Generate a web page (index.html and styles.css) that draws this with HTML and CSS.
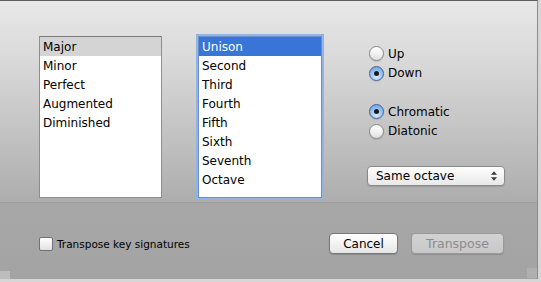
FILE: index.html
```html
<!DOCTYPE html>
<html>
<head>
    <title>Transpose</title>
    <link rel="stylesheet" href="styles.css">
</head>
<body>
    <div class="window">
        <div class="top-pane">
            <div class="list-box quality-list">
                <div class="list-row selected-inactive">Major</div>
                <div class="list-row">Minor</div>
                <div class="list-row">Perfect</div>
                <div class="list-row">Augmented</div>
                <div class="list-row">Diminished</div>
            </div>

            <div class="list-box interval-list">
                <div class="list-row selected">Unison</div>
                <div class="list-row">Second</div>
                <div class="list-row">Third</div>
                <div class="list-row">Fourth</div>
                <div class="list-row">Fifth</div>
                <div class="list-row">Sixth</div>
                <div class="list-row">Seventh</div>
                <div class="list-row">Octave</div>
            </div>

            <div class="options">
                <div class="radio-group">
                    <label class="radio"><span class="radio-dot"></span>Up</label>
                    <label class="radio"><span class="radio-dot checked"></span>Down</label>
                </div>
                <div class="radio-group">
                    <label class="radio"><span class="radio-dot checked"></span>Chromatic</label>
                    <label class="radio"><span class="radio-dot"></span>Diatonic</label>
                </div>
                <div class="popup">
                    <span>Same octave</span>
                    <svg class="popup-arrows" viewBox="0 0 7 11">
                        <path d="M3.5 0L7 4H0z"/>
                        <path d="M3.5 11L7 7H0z"/>
                    </svg>
                </div>
            </div>
        </div>

        <div class="bottom-pane">
            <label class="check">
                <span class="check-box"></span>
                Transpose key signatures
            </label>
            <div class="buttons">
                <button class="btn">Cancel</button>
                <button class="btn disabled">Transpose</button>
            </div>
        </div>

        <div class="grip grip-left"></div>
        <div class="grip grip-right"></div>
    </div>
</body>
</html>
```

FILE: styles.css
```css
* {
    margin: 0;
    padding: 0;
    box-sizing: border-box;
}

body {
    width: 541px;
    height: 282px;
    background: #d6d6d6;
    font-family: 'DejaVu Sans', sans-serif;
    font-size: 12px;
    color: #000;
    overflow: hidden;
}

.window {
    position: relative;
    width: 538px;
    height: 279px;
    border-top: 1px solid #5c5c5c;
    border-right: 1px solid #8c8c8c;
    display: flex;
    flex-direction: column;
    background: #a5a5a5;
}

.top-pane {
    height: 201px;
    display: flex;
    align-items: flex-start;
    padding: 35px 0 0 39px;
    background: linear-gradient(to bottom, #e8e8e8 0%, #d6d6d6 35%, #bdbdbd 75%, #adadad 100%);
}

/* List boxes */
.list-box {
    background: #fff;
    border: 1px solid #8d8d8d;
    border-top-color: #7a7a7a;
    height: 162px;
}

.quality-list {
    width: 123px;
}

.interval-list {
    width: 124px;
    margin-left: 36px;
    border-color: #6a8fcf;
    box-shadow: 0 0 0 2px #93b3e3;
}

.list-row {
    height: 19px;
    line-height: 19px;
    padding: 1px 0 0 3px;
    white-space: nowrap;
}

.list-row.selected-inactive {
    background: #d4d4d4;
}

.list-row.selected {
    background: #3875d7;
    color: #fff;
}

/* Right column */
.options {
    margin-left: 46px;
    padding-top: 8px;
    display: flex;
    flex-direction: column;
}

.radio-group {
    display: flex;
    flex-direction: column;
    margin-bottom: 19px;
}

.radio {
    display: flex;
    align-items: center;
    height: 19.5px;
    padding-left: 1px;
}

.radio-dot {
    width: 15px;
    height: 15px;
    border-radius: 50%;
    margin-right: 4px;
    border: 1px solid #888;
    background: linear-gradient(to bottom, #ffffff 0%, #f2f2f2 50%, #dedede 100%);
    box-shadow: 0 1px 1px rgba(0, 0, 0, 0.12);
    display: flex;
    align-items: center;
    justify-content: center;
}

.radio-dot.checked {
    border-color: #4d5f9a;
    background: radial-gradient(circle at 50% 75%, #d6ecff 0%, #9cc8f5 45%, #5f93dc 100%);
}

.radio-dot.checked::after {
    content: '';
    width: 5px;
    height: 5px;
    border-radius: 50%;
    background: #1b1b1b;
}

.popup {
    margin-top: 6px;
    margin-left: -1px;
    width: 138px;
    height: 20px;
    border: 1px solid #8a8a8a;
    border-radius: 4px;
    background: linear-gradient(to bottom, #ffffff 0%, #f4f4f4 50%, #e8e8e8 100%);
    box-shadow: 0 1px 1px rgba(0, 0, 0, 0.12);
    display: flex;
    align-items: center;
    justify-content: space-between;
    padding: 0 7px 0 8px;
}

.popup-arrows {
    width: 6px;
    height: 10px;
    fill: #3a3a3a;
}

/* Bottom bar */
.bottom-pane {
    flex: 1;
    display: flex;
    align-items: center;
    justify-content: space-between;
    padding: 5px 33px 0 39px;
    background: linear-gradient(to bottom, #a8a8a8 0%, #a3a3a3 100%);
    border-top: 1px solid #a0a0a0;
}

.check {
    display: flex;
    align-items: center;
    font-size: 10.5px;
}

.check-box {
    width: 14px;
    height: 14px;
    border: 1px solid #727272;
    border-radius: 2px;
    margin-right: 4px;
    background: linear-gradient(to bottom, #ffffff 0%, #f0f0f0 50%, #e0e0e0 100%);
}

.buttons {
    display: flex;
    gap: 13px;
}

.btn {
    font-family: 'DejaVu Sans', sans-serif;
    font-size: 12px;
    height: 21px;
    border: 1px solid #777;
    border-radius: 4px;
    background: linear-gradient(to bottom, #ffffff 0%, #f3f3f3 50%, #e6e6e6 100%);
    box-shadow: 0 1px 1px rgba(0, 0, 0, 0.15);
    color: #000;
}

.btn:first-child {
    width: 69px;
}

.btn.disabled {
    width: 93px;
    font-size: 12.5px;
    color: #8c8c8c;
    border-color: #999;
    background: linear-gradient(to bottom, #d2d2d2 0%, #c8c8c8 100%);
}

/* Window corner decorations */
.grip {
    position: absolute;
    width: 10px;
    height: 8px;
    background: #b4b4b4;
}

.grip-left {
    left: 0;
    bottom: 0;
    background: #bdbdbd;
}

.grip-right {
    right: 0;
    bottom: 1px;
    height: 10px;
    background: #b0b0b0;
}
```
